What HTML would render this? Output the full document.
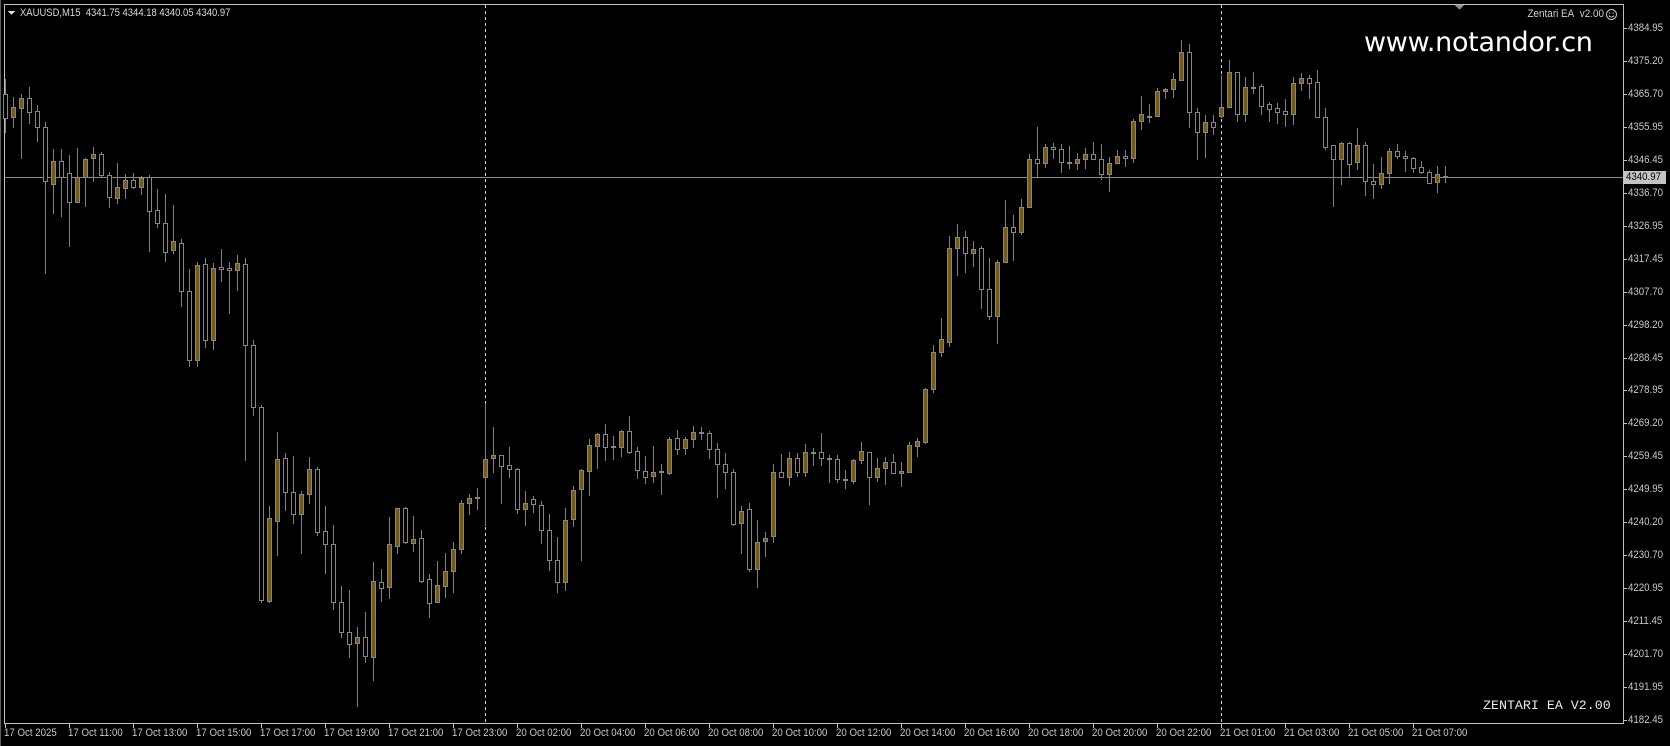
<!DOCTYPE html>
<html><head><meta charset="utf-8">
<style>
html,body{margin:0;padding:0;background:#000;width:1670px;height:746px;overflow:hidden;}
body{position:relative;font-family:"Liberation Sans",sans-serif;}
.t{position:absolute;color:#c8c8c8;font-size:11px;line-height:12px;white-space:nowrap;}
.tl{transform:scaleX(0.88);transform-origin:0 0;}
svg{position:absolute;left:0;top:0;}
</style></head><body>
<svg id="c" width="1670" height="746" xmlns="http://www.w3.org/2000/svg" shape-rendering="crispEdges"></svg>

<div class="t" style="left:20px;top:7px;color:#d8d8d8;transform:scaleX(0.86);transform-origin:0 0;">XAUUSD,M15&nbsp; 4341.75 4344.18 4340.05 4340.97</div>
<div class="t" style="right:66px;top:8px;color:#d0d0d0;transform:scaleX(0.9);transform-origin:100% 0;">Zentari EA&nbsp; v2.00</div>
<div style="position:absolute;left:1364px;top:27px;color:#fff;font-size:27px;line-height:32px;font-family:'DejaVu Sans','Liberation Sans',sans-serif;letter-spacing:-0.3px;">www.notandor.cn</div>
<div style="position:absolute;left:1483px;top:698px;color:#e8e8e8;font-size:13.3px;line-height:16px;font-family:'Liberation Mono',monospace;">ZENTARI EA V2.00</div>
<div style="position:absolute;left:1624px;top:171px;width:42px;height:13px;background:#c4c4c4;"></div>
<div id="labels"></div>

<script>
var S=document.getElementById('c');var h='';
function L(x1,y1,x2,y2,c,extra){h+='<line x1="'+x1+'" y1="'+y1+'" x2="'+x2+'" y2="'+y2+'" stroke="'+c+'" stroke-width="1" '+(extra||'')+'/>';}
L(0.5,0,0.5,746,'#606060');
L(4.5,4,4.5,724,'#c0c0c0');L(4,4.5,1624,4.5,'#c0c0c0');
L(1623.5,4,1623.5,724,'#c0c0c0');L(4,723.5,1624,723.5,'#c0c0c0');
L(485.5,5,485.5,723,'#d0d0d0','stroke-dasharray="3,3"');
L(1221.5,5,1221.5,723,'#d0d0d0','stroke-dasharray="3,3"');
L(5,177.5,1623,177.5,'#8a8a8a');
h+='<polygon points="1455,5 1464,5 1459.5,10" fill="#909090"/>';
h+='<polygon points="8,11 15,11 11.5,15" fill="#e0e0e0"/>';
h+='<circle cx="1611.5" cy="14.5" r="5" fill="none" stroke="#c8c8c8" shape-rendering="auto"/><circle cx="1609.7" cy="13" r="0.7" fill="#c8c8c8"/><circle cx="1613.3" cy="13" r="0.7" fill="#c8c8c8"/><path d="M1608.8 15.6 Q1611.5 18.5 1614.2 15.6" fill="none" stroke="#c8c8c8" shape-rendering="auto"/>';
var D=[
[0,94,118,79,132],[1,107,117,97,127],[1,98,108,94,158],[0,98,112,87,123],[0,111,127,105,141],[0,127,181,122,273],[1,161,184,149,213],[0,161,177,149,216],[0,173,202,155,246],[1,177,202,148,202],
[1,159,177,158,206],[1,154,158,147,181],[0,154,175,152,177],[0,175,197,172,207],[1,187,198,163,203],[1,180,188,174,198],[0,180,187,173,188],[1,178,187,176,194],[0,177,211,175,251],[0,210,223,189,227],
[0,223,252,194,261],[1,241,250,205,253],[0,243,291,239,306],[0,291,360,269,366],[1,265,360,262,366],[0,264,340,258,347],[1,268,340,263,349],[0,267,269,249,281],[0,268,270,262,313],[1,263,270,255,290],
[0,264,345,258,460],[0,345,407,340,415],[0,407,600,405,602],[1,518,601,506,602],[1,459,521,432,555],[0,458,492,453,510],[0,492,514,456,523],[1,494,514,491,553],[1,469,494,457,503],[0,469,532,467,535],
[0,531,544,506,573],[0,544,602,525,609],[0,602,632,586,637],[0,632,644,590,657],[1,637,643,627,706],[0,637,656,612,662],[1,581,657,562,680],[0,582,588,569,601],[1,544,587,517,598],[1,508,546,508,553],
[0,508,542,507,543],[1,539,543,516,551],[0,538,581,530,582],[0,579,603,574,617],[1,585,602,561,602],[1,571,586,553,597],[1,549,571,542,592],[1,503,549,500,553],[1,498,503,494,514],[1,497,498,488,509],
[1,459,477,403,525],[1,455,458,427,472],[0,455,466,455,503],[0,465,469,447,477],[0,469,509,468,513],[1,503,509,491,525],[0,499,504,496,512],[0,505,530,501,543],[0,530,560,514,570],[0,560,582,537,592],
[1,520,582,508,590],[1,490,519,486,526],[1,470,489,469,560],[1,445,471,439,495],[1,434,446,433,468],[0,434,447,424,460],[0,446,447,436,459],[1,431,447,430,456],[0,431,452,416,453],[0,451,470,447,478],
[0,471,477,456,483],[1,472,476,446,482],[1,471,472,464,494],[1,439,473,437,474],[0,438,449,430,454],[1,439,448,437,454],[1,432,439,426,447],[0,432,433,427,439],[0,433,449,431,458],[0,449,464,443,497],
[0,464,472,453,488],[0,472,524,469,525],[1,511,523,506,553],[0,509,569,503,571],[1,542,569,520,587],[1,538,541,532,556],[1,472,536,464,542],[0,472,477,454,477],[1,458,477,452,485],[0,458,472,453,476],
[1,452,472,444,476],[0,452,453,448,465],[0,452,458,433,465],[0,458,459,455,482],[0,459,479,455,482],[0,479,480,470,488],[1,460,481,459,483],[1,451,460,442,463],[0,452,477,452,504],[1,468,477,458,481],
[1,462,468,457,484],[0,462,473,454,473],[1,471,473,462,486],[1,445,472,442,472],[1,441,446,438,456],[1,389,442,388,443],[1,352,389,345,392],[1,339,352,318,356],[1,248,342,236,346],[1,237,248,224,275],
[0,237,253,231,272],[1,249,253,241,266],[0,248,289,246,308],[0,289,316,258,319],[1,262,316,260,343],[1,227,262,200,262],[0,227,232,215,260],[1,207,232,199,234],[1,159,207,154,207],[0,159,163,127,176],
[1,147,163,144,167],[0,147,149,143,158],[0,149,162,144,172],[0,162,163,146,168],[1,159,163,153,169],[1,154,159,148,168],[0,154,159,142,159],[0,159,174,144,179],[1,163,174,157,191],[1,156,163,150,163],
[0,156,158,150,166],[1,121,158,119,162],[1,114,121,96,129],[0,116,117,104,122],[1,91,116,88,116],[1,89,91,88,98],[1,79,89,73,97],[1,52,80,40,80],[0,52,112,44,127],[0,112,132,108,159],
[1,122,132,115,157],[0,122,127,115,134],[1,107,116,75,117],[1,72,107,60,107],[0,72,114,72,121],[1,87,114,77,121],[0,87,88,72,93],[0,86,106,84,114],[0,104,109,102,121],[0,108,112,103,123],
[0,111,114,99,126],[1,83,114,77,124],[1,78,83,73,90],[0,78,83,75,98],[0,82,117,70,117],[0,117,147,108,149],[0,145,159,145,206],[1,143,159,142,184],[0,143,164,142,177],[1,145,162,128,169],
[0,145,181,142,195],[0,181,184,164,198],[1,173,184,157,188],[1,151,173,148,183],[0,151,156,144,158],[0,156,158,151,171],[0,158,168,157,172],[0,167,172,161,173],[0,172,183,170,183],[1,174,182,166,192],
[0,176,177,166,182]];
for(var i=0;i<D.length;i++){var d=D[i],cx=5+8*i;
 L(cx+0.5,d[3],cx+0.5,d[4]+1,'#808080');
 var ht=Math.max(d[2]-d[1],1);
 h+='<rect x="'+(cx-1.5)+'" y="'+(d[1]+0.5)+'" width="4" height="'+ht+'" fill="'+(d[0]?'#7a5a0c':'#000')+'" stroke="#858585" stroke-width="1"/>';
}
var P=['4384.95','4375.20','4365.70','4355.95','4346.45','4336.70','4326.95','4317.45','4307.70','4298.20','4288.45','4278.95','4269.20','4259.45','4249.95','4240.20','4230.70','4220.95','4211.45','4201.70','4191.95','4182.45'];
var lab='';
for(var k=0;k<P.length;k++){var y=Math.round(28+k*32.95);L(1624,y+0.5,1627,y+0.5,'#c0c0c0');
 lab+='<div class="t tl" style="left:1628px;top:'+(y-6)+'px;">'+P[k]+'</div>';}
lab+='<div class="t tl" style="left:1626px;top:171px;color:#000;">4340.97</div>';
var T=['17 Oct 2025','17 Oct 11:00','17 Oct 13:00','17 Oct 15:00','17 Oct 17:00','17 Oct 19:00','17 Oct 21:00','17 Oct 23:00','20 Oct 02:00','20 Oct 04:00','20 Oct 06:00','20 Oct 08:00','20 Oct 10:00','20 Oct 12:00','20 Oct 14:00','20 Oct 16:00','20 Oct 18:00','20 Oct 20:00','20 Oct 22:00','21 Oct 01:00','21 Oct 03:00','21 Oct 05:00','21 Oct 07:00'];
for(var k=0;k<T.length;k++){var x=5+64*k;L(x+0.5,724,x+0.5,728,'#c0c0c0');
 lab+='<div class="t tl" style="left:'+(x-1)+'px;top:727px;">'+T[k]+'</div>';}
S.innerHTML=h;document.getElementById('labels').innerHTML=lab;
</script>
</body></html>
